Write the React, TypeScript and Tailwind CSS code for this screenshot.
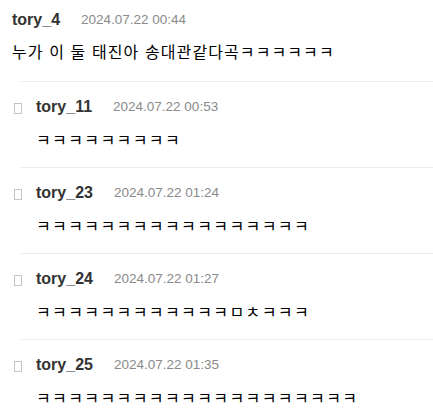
const font = {
  fontFamily: '"Liberation Sans", "Noto Sans CJK KR", sans-serif',
};

type Reply = {
  user: string;
  date: string;
  text: string;
};

const replies: Reply[] = [
  { user: "tory_11", date: "2024.07.22 00:53", text: "ㅋㅋㅋㅋㅋㅋㅋㅋㅋ" },
  { user: "tory_23", date: "2024.07.22 01:24", text: "ㅋㅋㅋㅋㅋㅋㅋㅋㅋㅋㅋㅋㅋㅋㅋㅋㅋ" },
  { user: "tory_24", date: "2024.07.22 01:27", text: "ㅋㅋㅋㅋㅋㅋㅋㅋㅋㅋㅋㅋㅁㅊㅋㅋㅋ" },
  { user: "tory_25", date: "2024.07.22 01:35", text: "ㅋㅋㅋㅋㅋㅋㅋㅋㅋㅋㅋㅋㅋㅋㅋㅋㅋㅋㅋㅋ" },
];

function Meta({ user, date }: { user: string; date: string }) {
  return (
    <div className="flex items-center gap-[21px] h-5">
      <span className="text-[16px] font-bold text-[#333]">{user}</span>
      <span className="text-[13.5px] text-[#8a8a8a]">{date}</span>
    </div>
  );
}

export default function App() {
  return (
    <div className="w-[433px] h-[418px] overflow-hidden bg-white" style={font}>
      <div className="px-3 pt-[10px] pb-[16px]">
        <Meta user="tory_4" date="2024.07.22 00:44" />
        <p className="mt-[11px] h-6 leading-6 text-[16px] tracking-[1.1px] text-black whitespace-nowrap">
          누가 이 둘 태진아 송대관같다곡ㅋㅋㅋㅋㅋㅋ
        </p>
      </div>

      {replies.map((r) => (
        <div key={r.user} className="ml-[21px] border-t border-[#ebebeb]">
          <div className="-ml-[21px] flex pt-[15px] pb-[14px]">
            <div className="w-9 pl-[14px] pt-[6px] shrink-0">
              <span className="block w-[8px] h-[11px] border border-[#c4c4c4]" />
            </div>
            <div className="min-w-0">
              <Meta user={r.user} date={r.date} />
              <p className="mt-[12px] h-6 leading-6 text-[16px] tracking-[1.4px] text-black whitespace-nowrap">
                {r.text}
              </p>
            </div>
          </div>
        </div>
      ))}
    </div>
  );
}
